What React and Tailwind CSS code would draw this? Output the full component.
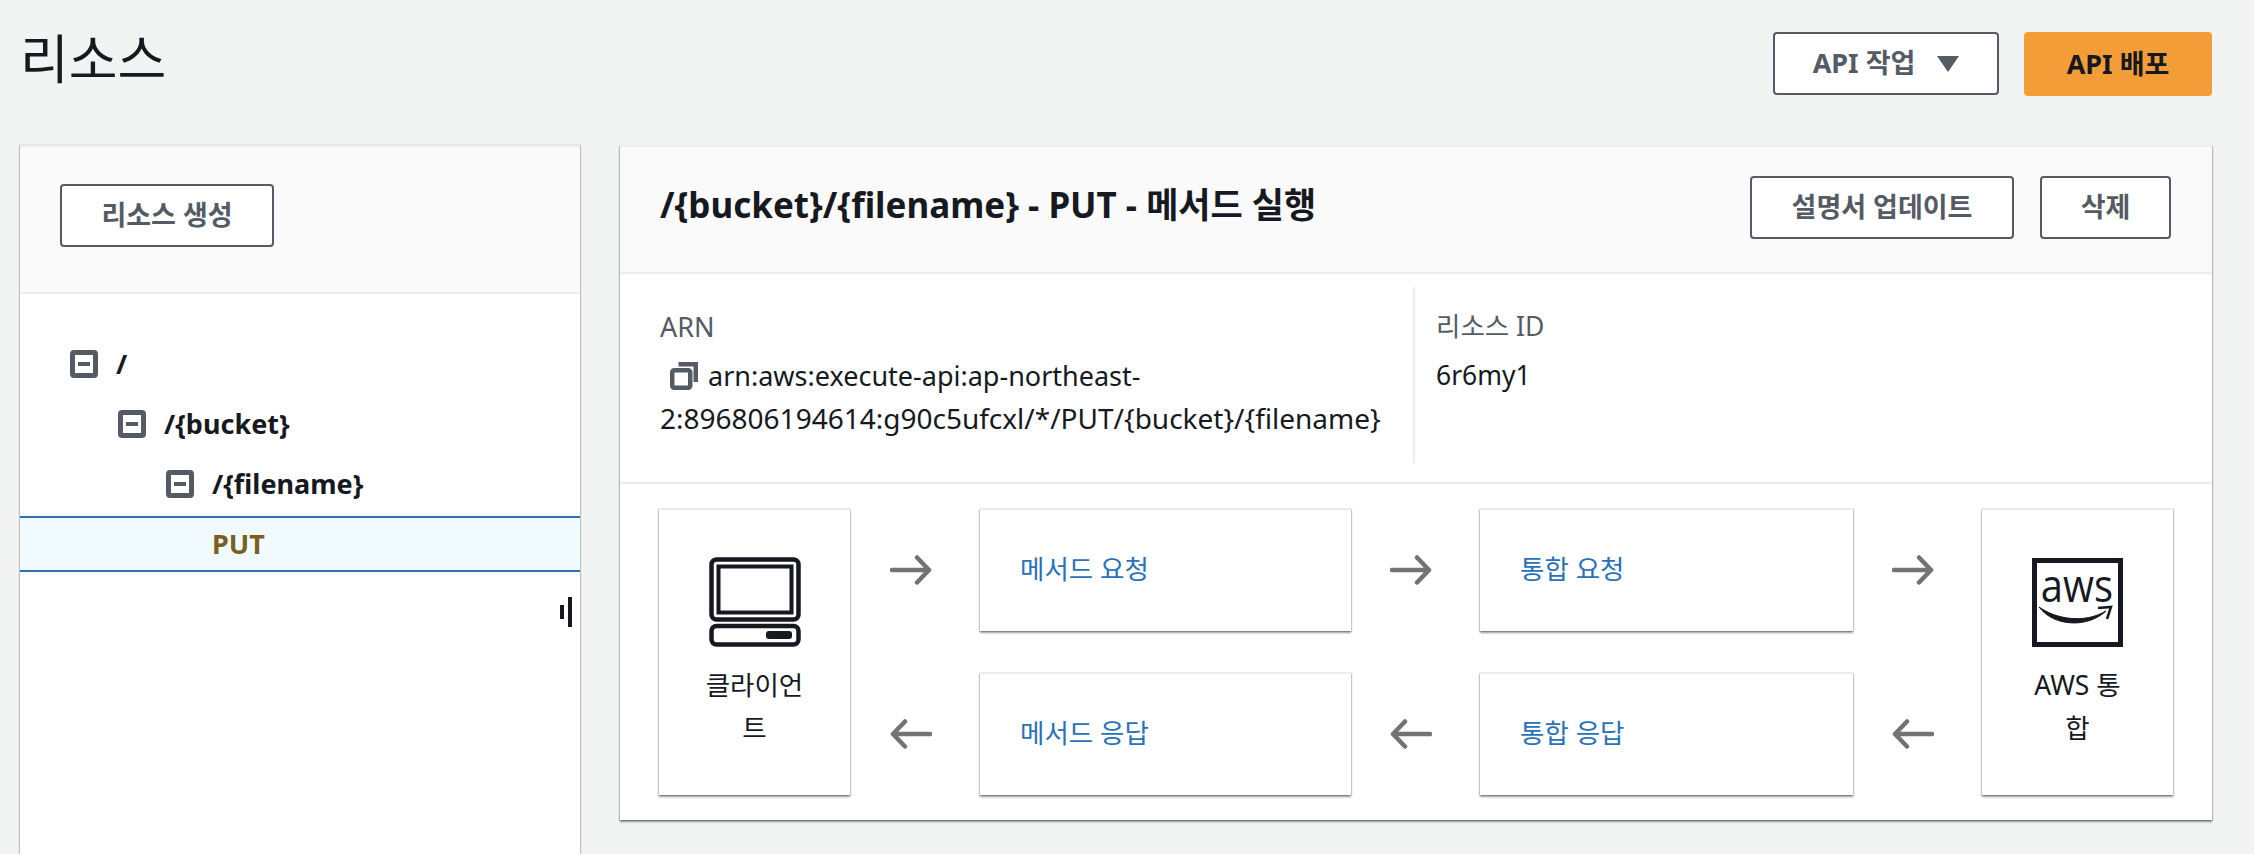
const FONT = { fontFamily: '"Noto Sans", "Noto Sans CJK KR", sans-serif' };

function Btn({ children, className = "" }) {
  return (
    <button className={`h-[63px] rounded-[4px] border-2 border-[#545b64] bg-white text-[27px] font-bold text-[#545b64] flex items-center justify-center ${className}`}>
      {children}
    </button>
  );
}

function Minus() {
  return (
    <svg width="28" height="28" viewBox="0 0 28 28" className="shrink-0">
      <rect x="2.5" y="2.5" width="23" height="23" rx="1.5" fill="none" stroke="#545b64" strokeWidth="5" />
      <rect x="8" y="12" width="12" height="4" fill="#545b64" />
    </svg>
  );
}

function TreeRow({ indent, label }) {
  return (
    <div className={`h-[60px] flex items-center gap-[18px] ${indent}`}>
      <Minus />
      <span className="text-[27px] font-bold text-[#16191f]">{label}</span>
    </div>
  );
}

function Arrow({ left }) {
  return (
    <div className="flex items-center justify-center pr-[9px]">
      <svg width="42" height="30" viewBox="0 0 42 30" fill="none" stroke="#737373" strokeWidth="4.5" strokeLinecap="round" strokeLinejoin="round">
        {left ? (
          <path d="M40 15H3M15 2.5L3 15l12 12.5" />
        ) : (
          <path d="M2 15h37M27 2.5L39 15 27 27.5" />
        )}
      </svg>
    </div>
  );
}

function LinkBox({ children }) {
  return (
    <div className="border-t-2 border-[#eaeded] bg-white shadow-[0_2px_2px_0_rgba(0,28,36,0.4),1px_1px_1px_0_rgba(0,28,36,0.12),-1px_1px_1px_0_rgba(0,28,36,0.12)] pl-[40px] pt-[39px] text-[26.5px] leading-[40px] text-[#2a71b8]">
      {children}
    </div>
  );
}

function ClientIcon() {
  return (
    <svg width="92" height="90" viewBox="0 0 92 90" fill="none" stroke="#16191f">
      <rect x="2.5" y="2.5" width="87" height="60" rx="5" strokeWidth="4.5" />
      <rect x="9.5" y="9.5" width="73" height="46" strokeWidth="4" />
      <rect x="2.5" y="69" width="87" height="18.5" rx="5" strokeWidth="4.5" />
      <rect x="57" y="74" width="26" height="8" rx="3" fill="#16191f" stroke="none" />
    </svg>
  );
}

function AwsIcon() {
  return (
    <svg width="91" height="90" viewBox="0 0 91 90">
      <rect x="2.5" y="3.5" width="86" height="84" fill="none" stroke="#16191f" strokeWidth="5" />
      <g transform="translate(45 45) scale(1 1.12)">
        <text x="0" y="0" textAnchor="middle" fontSize="40" fill="#16191f" style={{ fontFamily: '"Open Sans", sans-serif' }}>aws</text>
      </g>
      <path d="M7 50C24 62 52 67 74 54C56 71 22 70 7 50Z" fill="#16191f" stroke="#16191f" strokeWidth="1" />
      <path d="M66 51L79 50L75 62" fill="none" stroke="#16191f" strokeWidth="2.5" />
    </svg>
  );
}

function EndBox({ icon, label }) {
  return (
    <div className="row-span-3 border-t-2 border-[#eaeded] bg-white shadow-[0_2px_2px_0_rgba(0,28,36,0.4),1px_1px_1px_0_rgba(0,28,36,0.12),-1px_1px_1px_0_rgba(0,28,36,0.12)] flex flex-col items-center pt-[47px]">
      {icon}
      <div className="mt-[17px] w-[102px] text-center text-[26.5px] leading-[43px] text-[#16191f]">{label}</div>
    </div>
  );
}

export default function App() {
  return (
    <div style={FONT} className="h-[854px] w-[2254px] overflow-hidden bg-[#f2f3f3] pl-[20px] pr-[42px]">
      <div className="h-[145px] flex items-start justify-between">
        <h1 className="pt-[24px] text-[53px] leading-[70px] text-[#16191f]">리소스</h1>
        <div className="mt-[32px] flex gap-[25px]">
          <Btn className="w-[226px] gap-[22px]">
            API 작업
            <svg width="22" height="16" viewBox="0 0 22 16"><path d="M0 0h22L11 16z" fill="#545b64" /></svg>
          </Btn>
          <button className="h-[64px] w-[188px] rounded-[4px] bg-[#f29d38] text-[27px] font-bold text-[#16191f]">API 배포</button>
        </div>
      </div>

      <div className="flex gap-[40px] items-start">
        <aside className="h-[709px] w-[560px] shrink-0 bg-white shadow-[1px_0_1px_0_rgba(0,28,36,0.22),-1px_0_1px_0_rgba(0,28,36,0.22)]">
          <div className="h-[149px] border-t-2 border-b-2 border-[#eaeded] bg-[#fafafa] pl-[40px] pt-[37px]">
            <Btn className="w-[214px]">리소스 생성</Btn>
          </div>
          <div className="pt-[40px]">
            <TreeRow indent="pl-[50px]" label="/" />
            <TreeRow indent="pl-[98px]" label="/{bucket}" />
            <TreeRow indent="pl-[146px]" label="/{filename}" />
            <div className="mt-[2px] h-[56px] border-y-2 border-[#2a71b8] bg-[#f1faff] pl-[192px] flex items-center text-[27px] font-bold text-[#7a5f1f]">
              PUT
            </div>
            <div className="mt-[25px] flex justify-end pr-[8px] items-center gap-[4px]">
              <span className="h-[14px] w-[4px] bg-[#16191f]" />
              <span className="h-[30px] w-[4px] bg-[#16191f]" />
            </div>
          </div>
        </aside>

        <main className="h-[675px] flex-1 bg-white shadow-[0_2px_2px_0_rgba(0,28,36,0.4),1px_1px_1px_0_rgba(0,28,36,0.15),-1px_1px_1px_0_rgba(0,28,36,0.15)]">
          <div className="h-[129px] border-t-2 border-b-2 border-[#eaeded] bg-[#fafafa] pl-[40px] pr-[41px] flex justify-between">
            <h2 className="pt-[34px] text-[35px] leading-[48px] font-bold text-[#16191f]">/{"{bucket}"}/{"{filename}"} - PUT - 메서드 실행</h2>
            <div className="pt-[29px] flex gap-[26px]">
              <Btn className="w-[264px]">설명서 업데이트</Btn>
              <Btn className="w-[131px]">삭제</Btn>
            </div>
          </div>

          <div className="h-[210px] border-b-2 border-[#eaeded] pl-[40px] pt-[13px] flex">
            <div className="h-[176px] w-[755px] border-r-2 border-[#eaeded] text-[27px] leading-[43px]">
              <div className="pt-[18px] text-[#545b64]">ARN</div>
              <div className="mt-[6px] text-[#16191f]">
                <svg width="28" height="28" viewBox="0 0 28 28" className="ml-[10px] mr-[10px] inline-block align-[-4px]" fill="none" stroke="#545b64" strokeWidth="4.5">
                  <rect x="2.25" y="8.25" width="18" height="17.5" rx="2" />
                  <path d="M8.5 2.25H25.75V20" />
                </svg>
                arn:aws:execute-api:ap-northeast-<br />
                <span className="text-[28px]">2:896806194614:g90c5ufcxl/*/PUT/{"{bucket}"}/{"{filename}"}</span>
              </div>
            </div>
            <div className="pl-[21px] text-[26.5px] leading-[43px]">
              <div className="pt-[18px] text-[#545b64]">리소스 ID</div>
              <div className="mt-[6px] text-[#16191f]">6r6my1</div>
            </div>
          </div>

          <div className="mt-[24px] mx-[39px] grid grid-cols-[191px_130px_371px_129px_373px_129px_191px] grid-rows-[123px_41px_123px]">
            <EndBox icon={<ClientIcon />} label="클라이언트" />
            <Arrow />
            <LinkBox>메서드 요청</LinkBox>
            <Arrow />
            <LinkBox>통합 요청</LinkBox>
            <Arrow />
            <EndBox icon={<AwsIcon />} label="AWS 통합" />
            <div className="col-span-5" />
            <Arrow left />
            <LinkBox>메서드 응답</LinkBox>
            <Arrow left />
            <LinkBox>통합 응답</LinkBox>
            <Arrow left />
          </div>
        </main>
      </div>
    </div>
  );
}
